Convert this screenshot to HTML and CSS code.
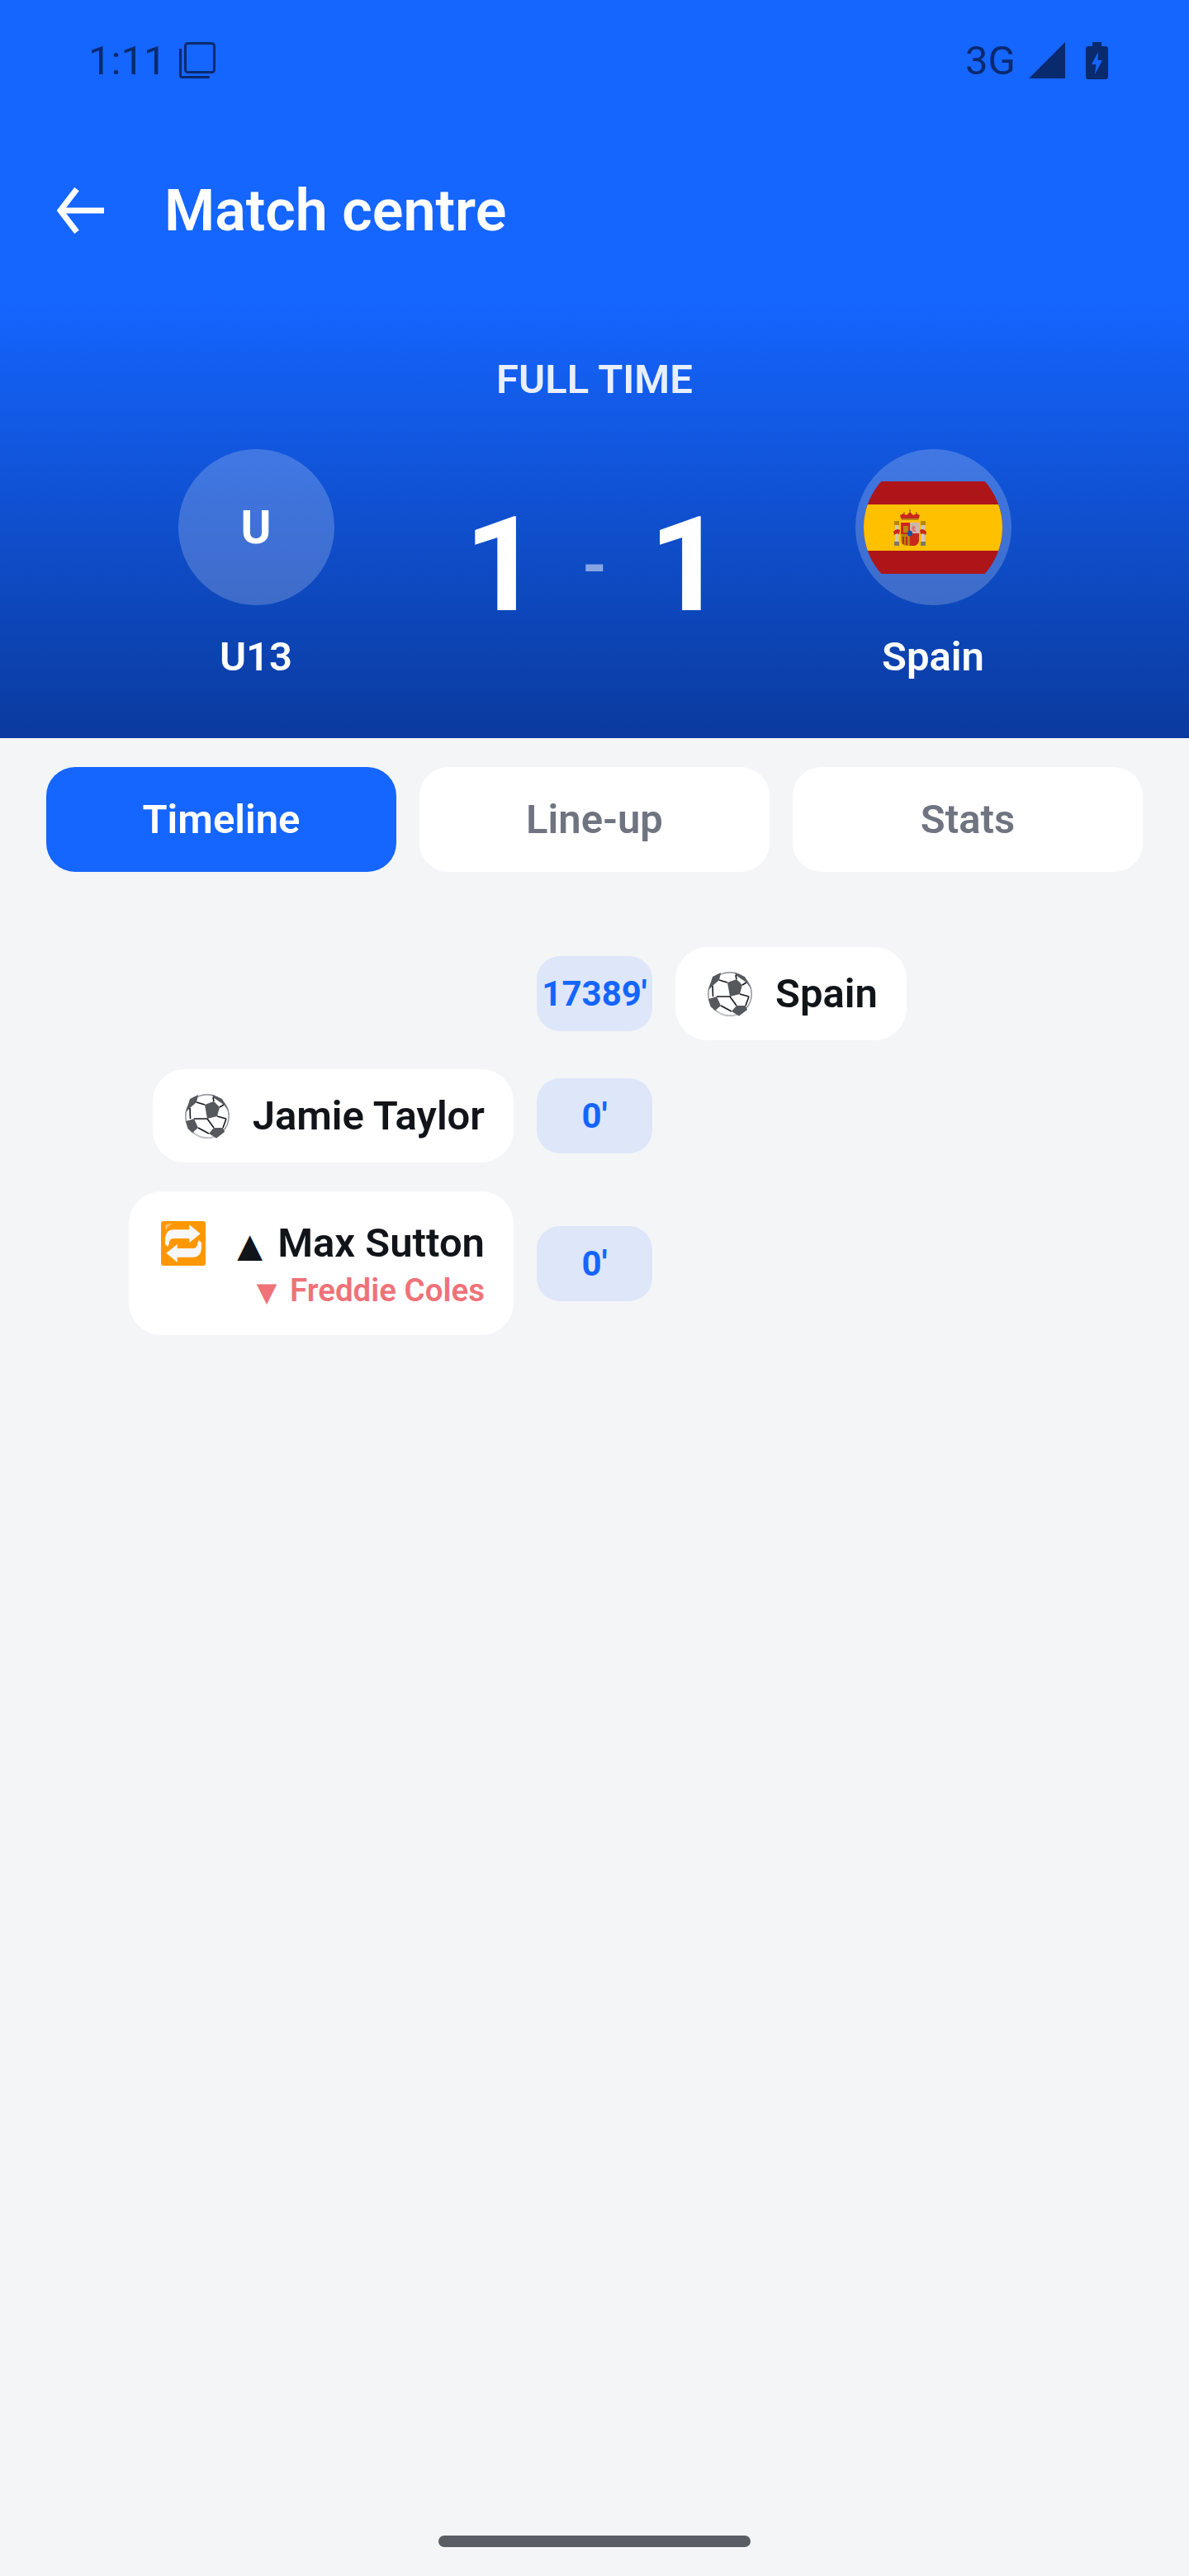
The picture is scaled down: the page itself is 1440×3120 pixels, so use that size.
FILE: index.html
```html
<!DOCTYPE html>
<html lang="en">
<head>
    <meta charset="UTF-8">
    <meta name="viewport" content="width=device-width, initial-scale=1.0">
    <title>Match centre</title>
    <link rel="stylesheet" href="styles.css">
</head>
<body>

    <div class="page">
        <div class="top-bar">
            <div class="status-bar">
                <div class="status-group">
                    <span class="status-text">1:11</span>
                    <svg class="icon-copy" width="46" height="46" viewBox="0 0 46 46" fill="none" stroke="#0a2a6e" stroke-width="3">
                        <rect x="8.5" y="2.5" width="35" height="35" rx="3"/>
                        <path d="M2.5 9v32.5a2 2 0 0 0 2 2H38"/>
                    </svg>
                </div>
                <div class="status-group">
                    <span class="status-text">3G</span>
                    <svg class="icon-signal" width="44" height="44" viewBox="0 0 44 44"><path d="M44 0V44H0Z" fill="#0a2a6e"/></svg>
                    <svg class="icon-battery" width="27" height="45" viewBox="0 0 27 45">
                        <path fill-rule="evenodd" fill="#0a2a6e" d="M8 0H19V5H24a3 3 0 0 1 3 3V42a3 3 0 0 1-3 3H3a3 3 0 0 1-3-3V8a3 3 0 0 1 3-3H8ZM15 12 7 27H12.5L11 39 20 22H14.5Z"/>
                    </svg>
                </div>
            </div>
            <div class="app-bar">
                <svg class="back-arrow" width="58" height="56" viewBox="0 0 58 56" fill="none" stroke="#fff" stroke-width="7">
                    <path d="M4 28H57"/>
                    <path d="M24 2 4 28 24 54"/>
                </svg>
                <h1 class="page-title">Match centre</h1>
            </div>
        </div>

        <div class="hero">
            <div class="match-status">FULL TIME</div>
            <div class="scoreline">
                <div class="team">
                    <div class="crest"><span class="crest-letter">U</span></div>
                    <div class="team-name">U13</div>
                </div>
                <div class="score">
                    <span>1</span>
                    <span class="score-dash">-</span>
                    <span>1</span>
                </div>
                <div class="team">
                    <div class="crest">
                        <div class="flag-clip">
                            <svg width="168" height="112" viewBox="0 0 168 112">
                                <rect width="168" height="112" fill="#ad1519"/>
                                <rect y="28" width="168" height="56" fill="#ffc000"/>
                                <!-- coat of arms -->
                                <g transform="translate(36 34)">
                                    <path d="M10 13 8 7 12 5 16 7 20 3 24 7 28 5 32 7 30 13Z" fill="#c8281e"/>
                                    <path d="M10 13H30V11H10ZM19 4H21V0H19ZM12 5h2V3h-2ZM27 5h2V3h-2Z" fill="#b8860b"/>
                                    <path d="M9 16H20V33H9Z" fill="#c8281e"/>
                                    <path d="M20 16H31V29H20Z" fill="#c9b7b0"/>
                                    <path d="M9 30H20V44H14Q9 42 9 37Z" fill="#b8860b"/>
                                    <path d="M20 29H31V37Q31 42 26 44H20Z" fill="#c8281e"/>
                                    <path d="M11 33h2v9h-2ZM15 33h2v10h-2ZM23 32h5v2h-5ZM23 36h5v2h-5Z" fill="#c8281e"/>
                                    <path d="M12 20H18V28H12Z" fill="#b8860b"/>
                                    <path d="M24 19l3 3-2 2 3 3h-4l-2-4Z" fill="#e0736a"/>
                                    <ellipse cx="20" cy="29" rx="3" ry="3.5" fill="#1f4f9c"/>
                                    <path d="M2 19H6V39H2ZM34 19H38V39H34Z" fill="#c8c8c8"/>
                                    <path d="M1 14H7V19H1ZM33 14H39V19H33Z" fill="#b8860b"/>
                                    <path d="M1 39H7V44H1ZM33 39H39V44H33Z" fill="#7d7a6a"/>
                                    <path d="M0 27Q4 22 8 25L7 30Q4 28 1 31ZM40 27Q36 22 32 25L33 30Q36 28 39 31Z" fill="#c8281e"/>
                                </g>
                            </svg>
                        </div>
                    </div>
                    <div class="team-name">Spain</div>
                </div>
            </div>
        </div>

        <div class="tabs">
            <div class="tab tab-active">Timeline</div>
            <div class="tab">Line-up</div>
            <div class="tab">Stats</div>
        </div>

        <div class="timeline">
            <div class="event">
                <div class="minute">17389'</div>
                <div class="event-card card-away">
                    <svg class="event-icon" viewBox="0 0 54 54"><use href="#ball"/></svg>
                    <span class="player">Spain</span>
                </div>
            </div>

            <div class="event">
                <div class="event-card card-home">
                    <svg class="event-icon" viewBox="0 0 54 54"><use href="#ball"/></svg>
                    <span class="player">Jamie Taylor</span>
                </div>
                <div class="minute">0'</div>
            </div>

            <div class="event">
                <div class="event-card card-home card-sub">
                    <svg class="event-icon" viewBox="0 0 54 54">
                        <rect width="54" height="54" rx="3" fill="#ff9800"/>
                        <path d="M5 5 Q7 3 14 3 Q8 6 6 12Z" fill="#ffc166"/>
                        <path d="M34.3 4.3 47.7 15.3 34.3 26V21H15Q10 21 9.5 28L8 31 5 27.7V21Q6 10.3 15 10.3H34.3Z" fill="#f7f7fb"/>
                        <path transform="rotate(180 27 27)" d="M34.3 4.3 47.7 15.3 34.3 26V21H15Q10 21 9.5 28L8 31 5 27.7V21Q6 10.3 15 10.3H34.3Z" fill="#f7f7fb"/>
                    </svg>
                    <div class="sub-names">
                        <span class="player"><span class="arrow-on">▲</span> Max Sutton</span>
                        <span class="player-off"><span class="arrow-off">▼</span> Freddie Coles</span>
                    </div>
                </div>
                <div class="minute">0'</div>
            </div>
        </div>

        <div class="home-bar"><div class="home-indicator"></div></div>
    </div>

    <!-- football used by the goal events -->
    <svg class="sprite" width="0" height="0">
        <symbol id="ball" viewBox="0 0 54 54">
            <circle cx="27" cy="27" r="26.2" fill="#fff" stroke="#8b8e92" stroke-width="1.4"/>
            <path d="M7 45A27 27 0 0 0 47 45 32 32 0 0 1 7 45Z" fill="#c6c9cc"/>
            <g fill="#55585c">
                <path d="M24 13 35 9 42 16 39 27 27 30Z"/>
                <path d="M1 33 11 30 16 41 9 47 3.500 42Z"/>
                <path d="M35 41 46 41 48 46 38 53.500 29 48Z"/>
                <path d="M16 1 6 6 1 22 6 17 14 10Z"/>
                <path d="M33 1 45 6 53 21 47 13 34 4Z"/>
            </g>
            <g fill="none" stroke="#15181c" stroke-width="1.6">
                <path d="M24 13 14 10M35 9 34 4M42 16 47 13M39 27 50 30M27 30 11 30M27 30 35 41M50 30 46 41M16 41 29 48"/>
                <path d="M6 17 6.500 30"/>
            </g>
        </symbol>
    </svg>

</body>
</html>
```

FILE: styles.css
```css
* {
    box-sizing: border-box;
}
body {
    margin: 0;
    font-family: Roboto, "DejaVu Sans", sans-serif;
    background-color: #f4f5f7;
}
.page {
    display: flex;
    flex-direction: column;
    height: 3120px;
    overflow: hidden;
}
.sprite {
    display: block;
}

/* blue header */
.top-bar {
    background-color: #1565ff;
}
.status-bar {
    display: flex;
    justify-content: space-between;
    align-items: center;
    height: 146px;
    padding: 0 98px 0 107px;
    color: #0a2a6e;
}
.status-group {
    display: flex;
    align-items: center;
}
.status-text {
    font-size: 49px;
    line-height: 1;
}
.icon-copy {
    margin-left: 15px;
}
.icon-signal {
    margin-left: 16px;
}
.icon-battery {
    margin-left: 25px;
}
.app-bar {
    display: flex;
    align-items: center;
    height: 218px;
    padding-left: 69px;
}
.page-title {
    margin: 0 0 0 72px;
    font-size: 70px;
    font-weight: 600;
    color: #fff;
}
.hero {
    height: 530px;
    padding: 0 56px;
    background: linear-gradient(#1565ff, #0a3a9e);
}
.match-status {
    padding-top: 78px;
    font-size: 49px;
    line-height: 36px;
    font-weight: 600;
    text-align: center;
    color: rgba(255, 255, 255, 0.9);
}
.scoreline {
    display: grid;
    grid-template-columns: 508px minmax(0, 1fr) 508px;
    margin-top: 66px;
}
.team {
    display: flex;
    flex-direction: column;
    align-items: center;
}
.crest {
    display: flex;
    align-items: center;
    justify-content: center;
    width: 189px;
    height: 189px;
    border-radius: 50%;
    background-color: rgba(255, 255, 255, 0.2);
}
.crest-letter {
    font-size: 56px;
    font-weight: 700;
    color: #fff;
}
.flag-clip {
    display: flex;
    align-items: center;
    justify-content: center;
    width: 168px;
    height: 168px;
    border-radius: 50%;
    overflow: hidden;
}
.team-name {
    margin-top: 34px;
    font-size: 49px;
    line-height: 58px;
    font-weight: 600;
    color: #fff;
}
.score {
    display: flex;
    justify-content: center;
    gap: 51px;
    font-size: 160px;
    line-height: 186px;
    font-weight: 700;
    color: #fff;
    padding-top: 48px;
}
.score-dash {
    color: rgba(255, 255, 255, 0.5);
    font-size: 76px;
    line-height: 186px;
}

/* tabs */
.tabs {
    display: flex;
    gap: 28px;
    padding: 35px 56px 0;
}
.tab {
    flex: 1;
    height: 127px;
    line-height: 127px;
    border-radius: 35px;
    background-color: #fff;
    font-size: 49px;
    font-weight: 600;
    text-align: center;
    color: #6f7480;
}
.tab-active {
    background-color: #1565ff;
    color: #fff;
}

/* timeline */
.timeline {
    flex: 1;
    display: flex;
    flex-direction: column;
    gap: 35px;
    padding: 91px 56px 0;
}
.event {
    display: grid;
    grid-template-columns: 1fr 140px 1fr;
    column-gap: 28px;
    align-items: center;
}
.minute {
    grid-column: 2;
    display: flex;
    align-items: center;
    justify-content: center;
    height: 91px;
    border-radius: 28px;
    background-color: #dee6f9;
    font-size: 42px;
    font-weight: 700;
    color: #1565ff;
    white-space: nowrap;
}
.event-card {
    display: flex;
    align-items: center;
    gap: 28px;
    min-height: 113px;
    padding: 0 35px 0 39px;
    border-radius: 39px;
    background-color: #fff;
}
.card-home {
    grid-column: 1;
    grid-row: 1;
    justify-self: end;
}
.card-away {
    grid-column: 3;
    justify-self: start;
}
.card-sub {
    align-items: flex-start;
    height: 174px;
    padding: 34px 35px 0 39px;
    gap: 38px;
}
.card-sub .event-icon {
    margin-top: 2px;
}
.event-icon {
    display: block;
    width: 54px;
    height: 54px;
    flex-shrink: 0;
}
.player {
    font-size: 49px;
    line-height: 58px;
    font-weight: 600;
    color: #111418;
}
.arrow-on {
    font-size: 40px;
    line-height: 1;
    margin-right: 6px;
}
.arrow-off {
    font-size: 32px;
    line-height: 1;
    margin-right: 6px;
}
.sub-names {
    display: flex;
    flex-direction: column;
    align-items: flex-end;
}
.player-off {
    margin-top: 6px;
    font-size: 38.5px;
    line-height: 44px;
    font-weight: 600;
    color: #ef7279;
}

.home-bar {
    display: flex;
    justify-content: center;
    padding-bottom: 35px;
}
.home-indicator {
    width: 378px;
    height: 14px;
    border-radius: 7px;
    background-color: #5a5d63;
}
```
